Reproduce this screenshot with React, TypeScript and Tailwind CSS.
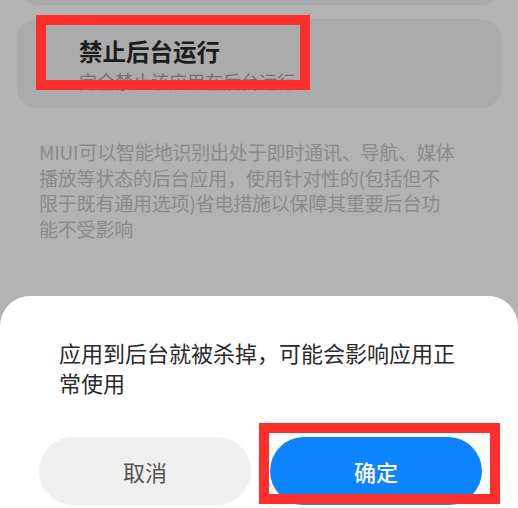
import React from "react";

const font = { fontFamily: '"Noto Sans CJK SC", "Noto Sans", sans-serif' };

export default function App() {
  return (
    <div
      className="relative w-[518px] h-[508px] overflow-hidden bg-[#b3b3b3]"
      style={font}
    >
      <div className="flex flex-col">
        <div className="mx-[17px] -mt-[55px] h-[60px] rounded-[20px] bg-[#ababab]" />
        <div className="mx-[17px] mt-[14px] h-[89px] rounded-[20px] bg-[#ababab] pl-[62px] pt-[18px]">
          <div className="text-[23.5px] leading-[28px] font-bold text-[#1c1c1c]">
            禁止后台运行
          </div>
          <div className="mt-[4px] text-[18px] leading-[24px] text-[#707070] whitespace-nowrap">
            完全禁止该应用在后台运行
          </div>
        </div>
        <p className="ml-[39px] mt-[31px] whitespace-nowrap text-[19px] leading-[25.5px] tracking-[-0.2px] text-[#8a8a8a]">
          MIUI可以智能地识别出处于即时通讯、导航、媒体
          <br />
          播放等状态的后台应用，使用针对性的(包括但不
          <br />
          限于既有通用选项)省电措施以保障其重要后台功
          <br />
          能不受影响
        </p>
      </div>

      <div className="absolute left-0 right-0 bottom-0 h-[212px] rounded-t-[30px] bg-white flex flex-col">
        <p className="px-[59px] pt-[41px] text-[22px] leading-[30px] text-[#2a2a2a]">
          应用到后台就被杀掉，可能会影响应用正常使用
        </p>
        <div className="mt-[40px] flex gap-[19px] pl-[39px] pr-[36px]">
          <div className="flex-1 h-[68px] rounded-full bg-[#efefef] flex items-center justify-center text-[22px] text-[#555555]">
            取消
          </div>
          <div className="flex-1 h-[68px] rounded-full bg-[#0d84ff] flex items-center justify-center text-[22px] font-medium text-white">
            确定
          </div>
        </div>
      </div>

      <div className="absolute left-[36px] top-[15px] w-[274px] h-[75px] border-[10px] border-[#fe2e2a]" />
      <div className="absolute left-[259px] top-[423px] w-[241px] h-[81px] border-[10px] border-[#fe2e2a]" />
    </div>
  );
}
